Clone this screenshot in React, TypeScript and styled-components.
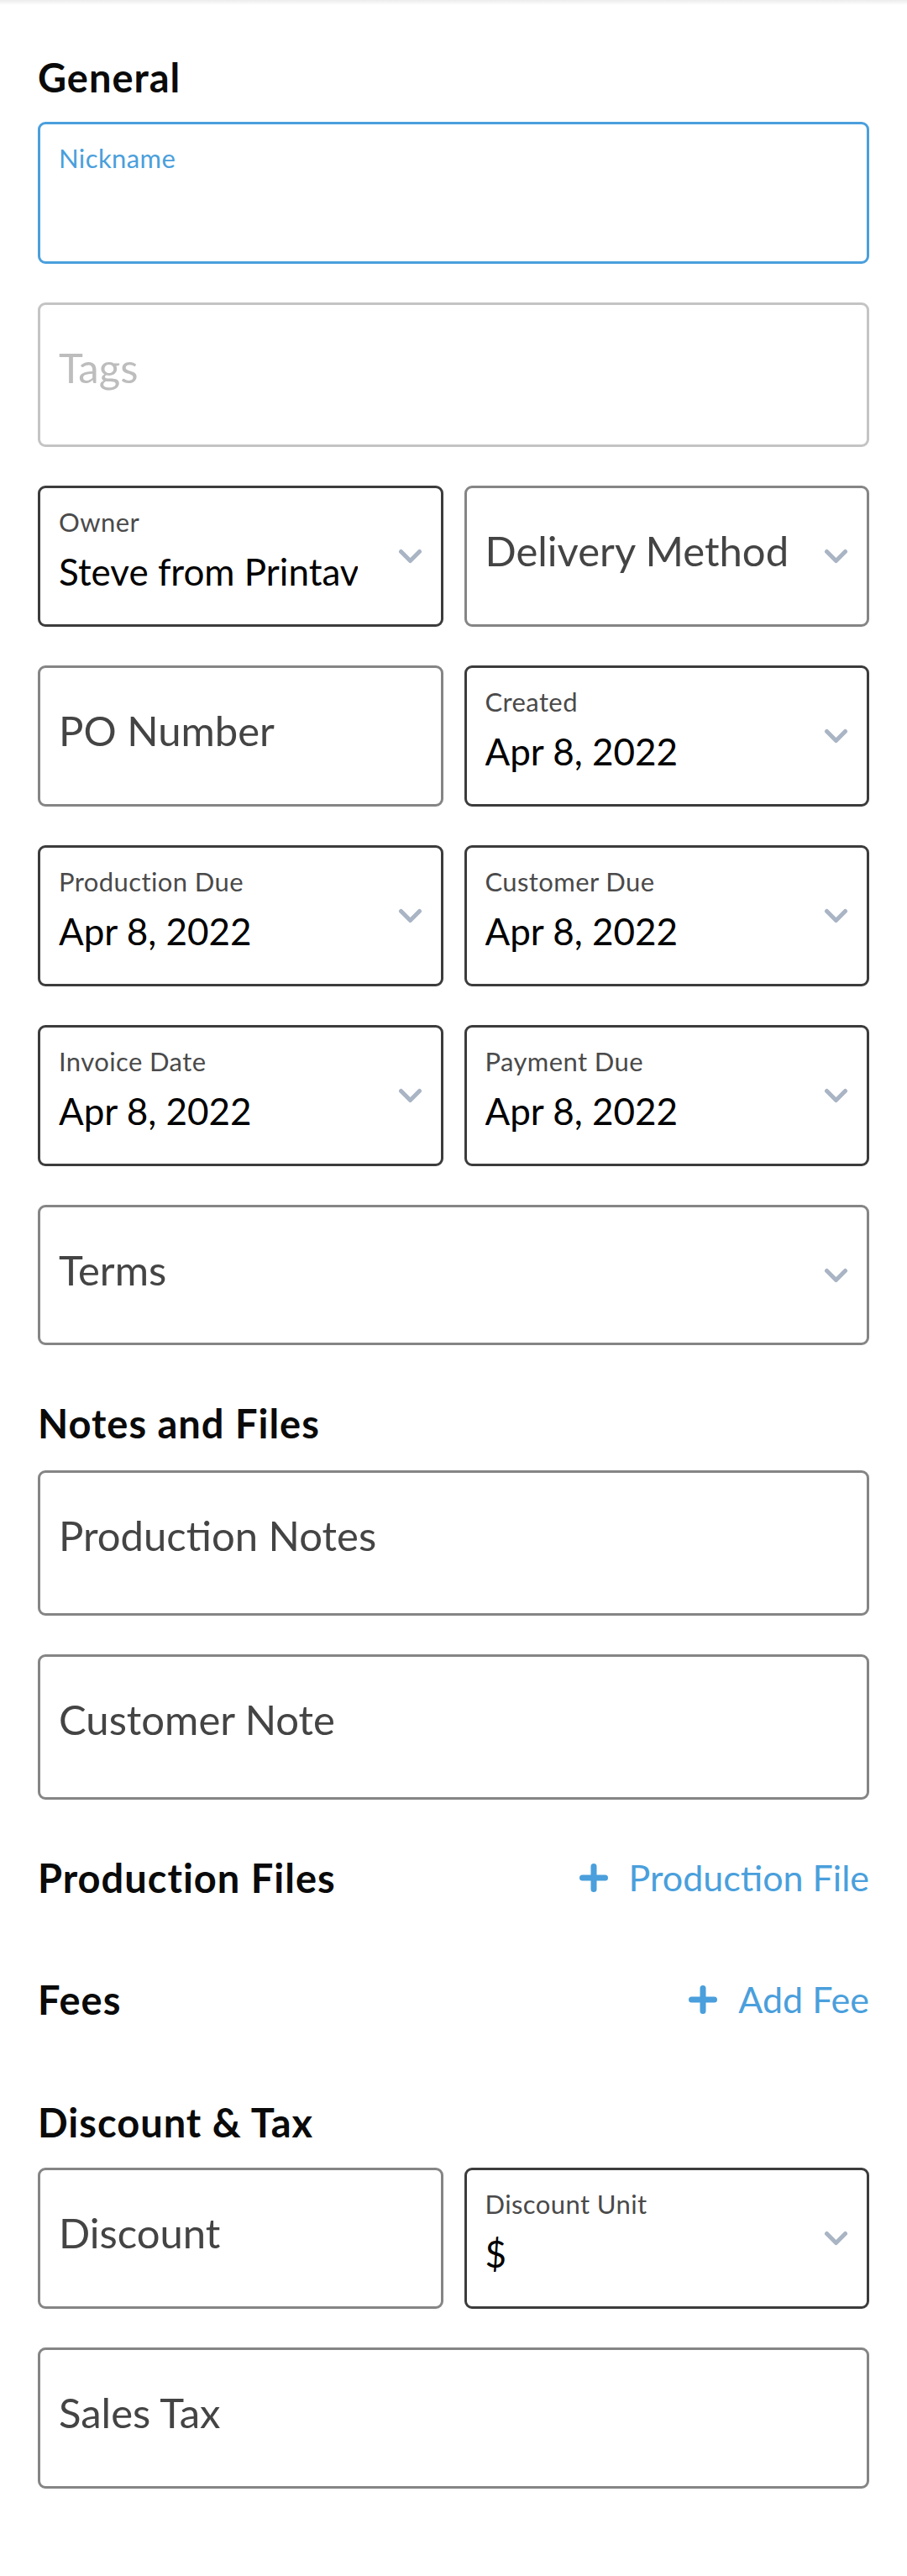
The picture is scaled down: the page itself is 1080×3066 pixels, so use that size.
import React from "react";
import styled, { createGlobalStyle } from "styled-components";

const GlobalStyle = createGlobalStyle`
  html, body {
    margin: 0;
    padding: 0;
    background: #ffffff;
  }
  body {
    font-family: Lato, "Open Sans", "Liberation Sans", sans-serif;
    -webkit-font-smoothing: antialiased;
  }
  * { box-sizing: border-box; }
`;

const TopShade = styled.div`
  height: 6px;
  background: linear-gradient(#ececec, #ffffff);
`;

const Page = styled.main`
  padding: 0 45px 104px;
  background: #ffffff;
`;

const SectionTitle = styled.h2<{ $mt: number; $mb?: number }>`
  margin: ${(p) => p.$mt}px 0 ${(p) => p.$mb ?? 29}px;
  font-size: 47px;
  line-height: 52px;
  font-weight: 700;
  letter-spacing: 1px;
  color: #0a0a0a;
`;

const ActionRow = styled.div<{ $mt: number }>`
  display: flex;
  justify-content: space-between;
  align-items: center;
  height: 52px;
  margin-top: ${(p) => p.$mt}px;
`;

const RowTitle = styled.h2`
  margin: 0;
  font-size: 47px;
  line-height: 52px;
  font-weight: 700;
  letter-spacing: 1px;
  color: #0a0a0a;
`;

const AddLink = styled.button`
  display: flex;
  align-items: center;
  gap: 25px;
  padding: 0;
  border: 0;
  background: none;
  font-family: inherit;
  font-size: 43px;
  line-height: 52px;
  font-weight: 400;
  color: #4a9fdc;
  cursor: pointer;
`;

type Tone = "focus" | "filled" | "empty" | "muted";

const toneColor: Record<Tone, string> = {
  focus: "#4a9fdc",
  filled: "#3c3c3c",
  empty: "#858585",
  muted: "#c4c4c4",
};

const Field = styled.div<{ $tone: Tone; $h: number; $mt?: number }>`
  display: flex;
  align-items: flex-start;
  height: ${(p) => p.$h}px;
  margin-top: ${(p) => p.$mt ?? 0}px;
  padding: 22px 22px 0 22px;
  border: 3px solid ${(p) => toneColor[p.$tone]};
  border-radius: 9px;
  background: #ffffff;
  min-width: 0;
`;

const FieldBody = styled.div<{ $reserve: number }>`
  flex: 1;
  min-width: 0;
  margin-right: ${(p) => p.$reserve}px;
  overflow: hidden;
`;

const Label = styled.div<{ $focus?: boolean }>`
  font-size: 31px;
  line-height: 36px;
  letter-spacing: 0.4px;
  color: ${(p) => (p.$focus ? "#4a9fdc" : "#4a4a4a")};
  white-space: nowrap;
`;

const Value = styled.div`
  margin-top: 15px;
  font-size: 44px;
  line-height: 52px;
  color: #000000;
  white-space: nowrap;
  overflow: hidden;
`;

const Placeholder = styled.div<{ $muted?: boolean }>`
  padding-top: 23px;
  font-size: 49px;
  line-height: 58px;
  color: ${(p) => (p.$muted ? "#bdbdbd" : "#444444")};
  white-space: nowrap;
`;

const ChevronWrap = styled.span`
  display: flex;
  align-self: center;
  margin-top: -22px;
  flex: none;
`;

const Pair = styled.div<{ $mt: number }>`
  display: grid;
  grid-template-columns: 1fr 1fr;
  gap: 25px;
  margin-top: ${(p) => p.$mt}px;
`;

const Chevron = () => (
  <ChevronWrap>
    <svg width="29" height="18" viewBox="0 0 29 18" fill="none">
      <polyline
        points="3.5,3.5 14.5,14.5 25.5,3.5"
        stroke="#a9b4c4"
        strokeWidth="5"
        strokeLinecap="round"
        strokeLinejoin="round"
      />
    </svg>
  </ChevronWrap>
);

const Plus = () => (
  <svg width="34" height="34" viewBox="0 0 34 34" fill="none">
    <path
      d="M17 3.5V30.5M3.5 17H30.5"
      stroke="#4a9fdc"
      strokeWidth="7"
      strokeLinecap="round"
    />
  </svg>
);

type FieldSpec = {
  label?: string;
  value?: string;
  placeholder?: string;
  tone: Tone;
  select?: boolean;
  h?: number;
  mt?: number;
};

const FormField = ({ label, value, placeholder, tone, select, h = 168, mt }: FieldSpec) => (
  <Field $tone={tone} $h={h} $mt={mt}>
    <FieldBody $reserve={value !== undefined ? 48 : 6}>
      {label !== undefined && <Label $focus={tone === "focus"}>{label}</Label>}
      {value !== undefined && <Value>{value}</Value>}
      {placeholder !== undefined && (
        <Placeholder $muted={tone === "muted"}>{placeholder}</Placeholder>
      )}
    </FieldBody>
    {select && <Chevron />}
  </Field>
);

export default function App() {
  return (
    <>
      <GlobalStyle />
      <TopShade />
      <Page>
        <SectionTitle $mt={60} $mb={27}>General</SectionTitle>
        <FormField tone="focus" label="Nickname" h={169} />
        <FormField tone="muted" placeholder="Tags" h={172} mt={46} />
        <Pair $mt={46}>
          <FormField tone="filled" label="Owner" value="Steve from Printavo" select />
          <FormField tone="empty" placeholder="Delivery Method" select />
        </Pair>
        <Pair $mt={46}>
          <FormField tone="empty" placeholder="PO Number" />
          <FormField tone="filled" label="Created" value="Apr 8, 2022" select />
        </Pair>
        <Pair $mt={46}>
          <FormField tone="filled" label="Production Due" value="Apr 8, 2022" select />
          <FormField tone="filled" label="Customer Due" value="Apr 8, 2022" select />
        </Pair>
        <Pair $mt={46}>
          <FormField tone="filled" label="Invoice Date" value="Apr 8, 2022" select />
          <FormField tone="filled" label="Payment Due" value="Apr 8, 2022" select />
        </Pair>
        <FormField tone="empty" placeholder="Terms" select mt={46} h={167} />

        <SectionTitle $mt={67} $mb={30}>Notes and Files</SectionTitle>
        <FormField tone="empty" placeholder="Production Notes" h={173} />
        <FormField tone="empty" placeholder="Customer Note" h={173} mt={46} />

        <ActionRow $mt={67}>
          <RowTitle>Production Files</RowTitle>
          <AddLink type="button">
            <Plus />
            Production File
          </AddLink>
        </ActionRow>
        <ActionRow $mt={93}>
          <RowTitle>Fees</RowTitle>
          <AddLink type="button">
            <Plus />
            Add Fee
          </AddLink>
        </ActionRow>

        <SectionTitle $mt={94} $mb={28}>Discount &amp; Tax</SectionTitle>
        <Pair $mt={0}>
          <FormField tone="empty" placeholder="Discount" />
          <FormField tone="filled" label="Discount Unit" value="$" select />
        </Pair>
        <FormField tone="empty" placeholder="Sales Tax" mt={46} />
      </Page>
    </>
  );
}
